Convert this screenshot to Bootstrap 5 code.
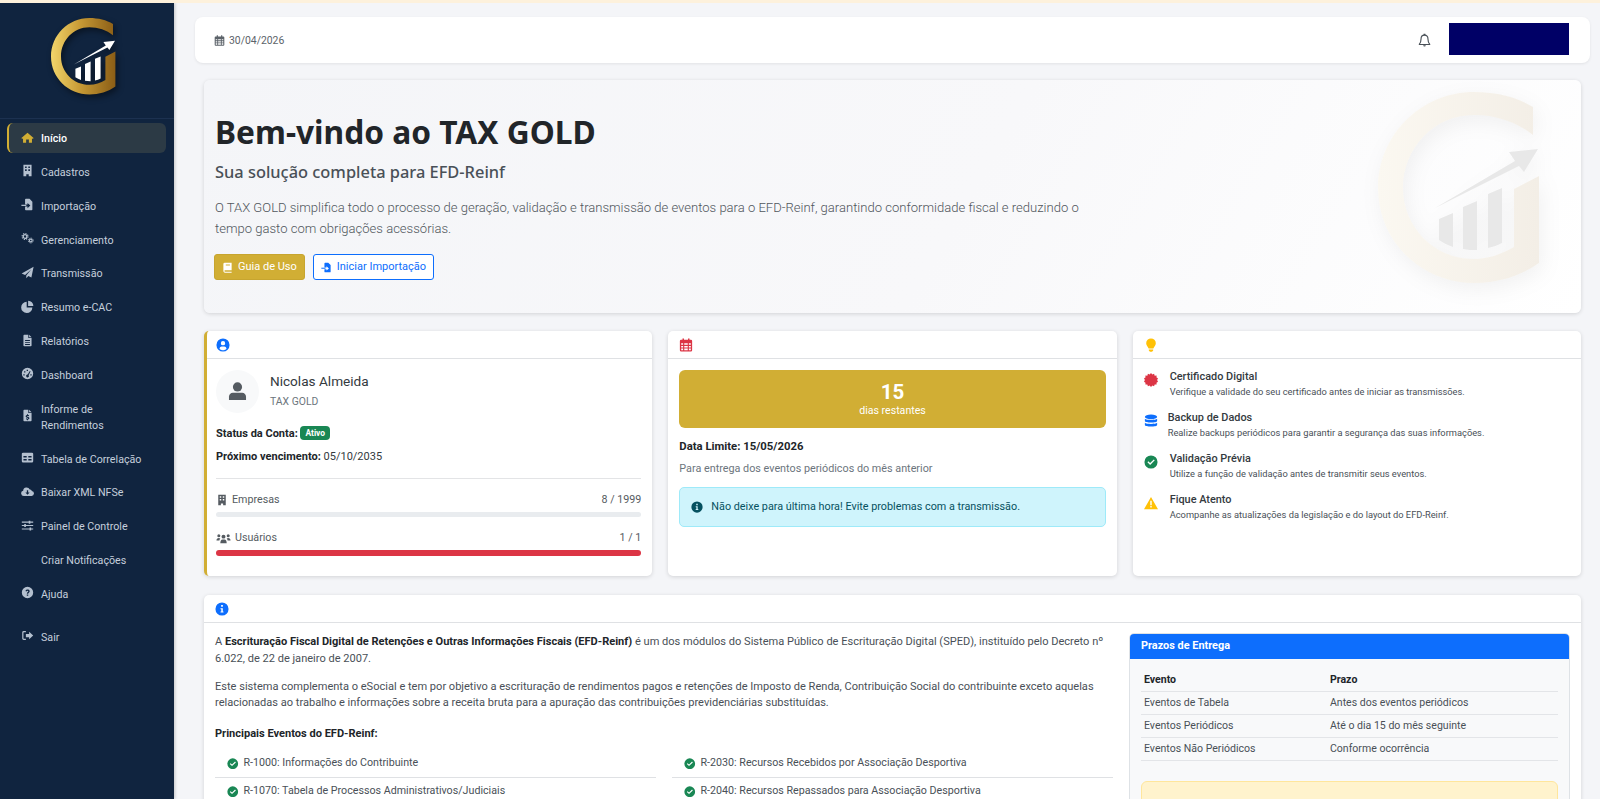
<!DOCTYPE html>
<html lang="pt-BR">
<head>
<meta charset="UTF-8">
<meta name="viewport" content="width=device-width, initial-scale=1.0">
<title>TAX GOLD</title>
<link href="https://cdn.jsdelivr.net/npm/bootstrap@5.3.0/dist/css/bootstrap.min.css" rel="stylesheet">
<style>
html, body { height: 100%; overflow: hidden; }
body { font-family: Roboto, "Noto Sans", sans-serif; font-size: 11px; background: #f4f5f8; color: #343a40; border-top: 3px solid #fdf1dc; }
.ico { width: 1em; height: 1em; fill: currentColor; flex-shrink: 0; }
.shell { height: 796px; }
.lateral { width: 174px; background: #10243f; box-shadow: 1px 0 3px rgba(0,0,0,.2); }
.logo-box { height: 116px; padding-top: 15px; border-bottom: 1px solid #1c3150; }
.logo-box svg { width: 66px; height: 78px; display: block; margin-left: 51px; filter: drop-shadow(2px 3px 3px rgba(0,0,0,.45)); }
.lateral .nav { padding: 4px 8px 0 7px; }
.lateral .nav-link { display: flex; align-items: center; color: #c5cfdc; font-size: 10.7px; line-height: 16px; padding: 8px 6px 6px 12px; margin-bottom: 3.85px; border-left: 2px solid transparent; border-radius: 6px; }
.lateral .nav-link .ico { width: 13px; height: 13px; margin-right: 7px; color: #b4c0cf; margin-top: -4px; }
.lateral .nav-link.ativo { background: #2c3a45; border-left-color: #d1ae34; color: #fff; font-weight: 500; }
.lateral .nav-link.ativo .ico { color: #d1ae34; }
.lateral .nav-link.sem-ico { padding-left: 32px; }
.lateral .nav-link.sair { margin-top: 9px; }
.principal { padding: 14px 10px 0 21px; min-width: 0; }
.topo { height: 46px; border-radius: 8px; padding: 0 21px 0 19px; box-shadow: 0 1px 3px rgba(0,0,0,.08); color: #5c636a; font-size: 10.4px; }
.topo .ico { font-size: 11px; }
.data-topo { padding-top: 2px; }
.sino { font-size: 15px !important; color: #495057; margin-right: 17px; }
.caixa-azul { width: 120px; height: 32px; background: #000066; margin-top: -2px; }
.conteudo { margin: 17px 9px 0; }
.hero { height: 233px; padding: 30px 11px 0; border-radius: 6px; border: 0; background: linear-gradient(120deg, #f4f5f8 0%, #f8f8fa 55%, #fff 100%); box-shadow: 0 1px 4px rgba(0,0,0,.14); }
.hero h1 { font-family: "Noto Sans", sans-serif; font-size: 31.7px; font-weight: 700; color: #212529; line-height: 44px; margin: 0 0 7px; }
.hero .sub { font-family: "Noto Sans", sans-serif; font-size: 16.4px; font-weight: 500; color: #495057; line-height: 22px; margin-bottom: 15px; }
.hero .txt { font-size: 13.05px; line-height: 20.5px; color: #50565c; width: 890px; margin-bottom: 15px; font-weight: 300; }
.marca { position: absolute; left: 1174px; top: 12px; width: 165px; height: 195px; filter: drop-shadow(3px 6px 10px rgba(0,0,0,.05)); }
.botoes { margin-left: -1px; }
.btn-ouro, .btn-linha { font-size: 11px; height: 26px; padding: 0 7px; display: inline-flex; align-items: center; gap: 5px; border-radius: 3px; }
.btn-ouro { background: #d1ae34; border: 1px solid #c7a52f; color: #fff; }
.btn-linha { border: 1px solid #0d6efd; color: #0d6efd; background: #fff; }
.cartao { border: 0; border-radius: 5px; box-shadow: 0 1px 4px rgba(0,0,0,.14); background: #fff; }
.cartao-topo { height: 28px; border-bottom: 1px solid #dfe1e4; padding: 0 11px; display: flex; align-items: center; font-size: 14px; }
.borda-ouro .cartao-topo { padding-left: 9px; }
.linha-cards { height: 264px; margin-top: 2px !important; }
.linha-cards .cartao { height: 245px; }
.borda-ouro { border-left: 3px solid #d1ae34; }
.corpo-perfil { padding: 11px 11px 0 9px; }
.corpo-prazo { padding: 11px 11px 0; }
.corpo-dicas { padding: 9px 11px 0; }
.corpo-info { padding: 10px 11px 11px; }
.avatar { width: 43px; height: 43px; background: #f8f9fa; color: #555b61; font-size: 21px; margin-right: 11px; margin-bottom: 13px; }
.nome { font-size: 13.6px; font-weight: 400; line-height: 18px; color: #343a40; margin-top: 2px; }
.empresa { font-size: 10.4px; color: #6c757d; line-height: 14px; margin-top: 5px; }
.dado { font-size: 11px; line-height: 16px; margin-bottom: 7px; }
.dado b { color: #212529; font-weight: 700; }
.selo { font-size: 8.4px; padding: 3px 5px; border-radius: 4px; vertical-align: 1px; font-weight: 700; }
.divisor { border-top: 1px solid #e3e4e6; margin: 13px 0 13px; }
.barra-fina { height: 5px; background: #e9ecef; margin-bottom: 13px; border-radius: 3px; }
.barra-cheia { height: 6px; background: #dc3545; border-radius: 3px; }
.uso { font-size: 10.7px; line-height: 16px; color: #555b61; margin-bottom: 4px; }
.uso .ico { font-size: 12px; margin-right: 4px; }
.uso .ico-largo { font-size: 15px; }
.dias { height: 58px; background: #d1ae34; border-radius: 6px; color: #fff; margin-bottom: 11px; padding-top: 10px; }
.dias strong { display: block; font-size: 20.5px; line-height: 24px; }
.dias span { display: block; font-size: 10.6px; line-height: 13px; }
.limite { font-size: 11.3px; font-weight: 700; color: #212529; line-height: 16px; margin-bottom: 6px; }
.obs { font-size: 10.8px; color: #6c757d; line-height: 15px; margin-bottom: 11px; }
.aviso { height: 40px; padding: 0 11px; font-size: 10.8px; display: flex; align-items: center; gap: 8px; margin: 0; border-radius: 5px; background: #cff4fc; border-color: #9eeaf9; color: #055160; }
.aviso .ico { font-size: 12px; }
.dica { display: flex; align-items: flex-start; height: 41px; }
.dica .ico { font-size: 14px; width: 14px; margin-right: 12px; margin-top: 5px; }
.dica .ico.text-primary { margin-right: 10px; }
.dica h6 { font-size: 10.9px; font-weight: 500; line-height: 15px; margin: 1px 0 1px; color: #343a40; }
.dica p { font-size: 9.3px; line-height: 14px; margin: 0; color: #495057; }
.texto p { font-size: 11.05px; line-height: 16.6px; color: #495057; margin-bottom: 11.5px; }
.texto .col-8 > p:first-child { margin-top: 1px; }
.texto p b { color: #212529; }
.texto .titulo-lista { font-weight: 700; color: #212529; margin: 14px 0 8px; }
.texto .list-group-item { font-size: 10.7px; line-height: 16px; padding: 5px 12px 6px; color: #495057; display: flex; align-items: center; gap: 5px; border-color: #dfe1e4; }
.texto .list-group-item .ico { font-size: 11.5px; color: #198754; }
.prazos { border: 1px solid #dee2e6; border-radius: 5px; background: #f8f9fa; overflow: hidden; }
.prazos-topo { height: 25px; background: #0d6efd; color: #fff; font-weight: 700; font-size: 10.9px; padding: 0 11px; display: flex; align-items: center; }
.prazos-corpo { padding: 10px 11px; }
.prazos table { font-size: 10.55px; margin-bottom: 20px; color: #495057; }
.prazos th { color: #212529; font-weight: 700; }
.prazos th:first-child { width: 44.6%; }
.prazos th, .prazos td { padding: 3px; line-height: 16px; border-color: #e3e5e8; }
.prazos .alert { font-size: 10.6px; padding: 14px 11px; }
</style>
</head>
<body>

<svg width="0" height="0" class="position-absolute">
  <defs>
    <linearGradient id="ouro" x1="0" y1="0" x2="1" y2="0">
      <stop offset="0" stop-color="#f2d56b"/>
      <stop offset=".45" stop-color="#c79a35"/>
      <stop offset="1" stop-color="#8a5d16"/>
    </linearGradient>
    <linearGradient id="ouro-claro" x1="0" y1="0" x2="1" y2="0">
      <stop offset="0" stop-color="#fbf8f1"/>
      <stop offset="1" stop-color="#f3eee6"/>
    </linearGradient>
    <symbol id="g-aro" viewBox="0 0 165 195">
      <path d="M155 15 C139 5 118 0 96 0 C43 0 0 43 0 96 C0 149 43 191 96 191 C120 191 143 184 161 171 V84 L136 97 V155 C124 162 110 167 96 167 C56 167 25 135 25 96 C25 56 56 23 96 23 C118 23 139 30 155 43 Z"/>
    </symbol>
    <symbol id="g-seta" viewBox="0 0 165 195">
      <path d="M57 116 L137 69 L131 60 L160 57 L146 80 L141 74 Z"/>
      <path d="M61 127 L75 121 V155 C70 153 65 151 61 148 Z"/>
      <path d="M85 115 L99 109 V158 C94 158 89 158 85 157 Z"/>
      <path d="M110 102 L124 96 V151 C120 153 115 155 110 156 Z"/>
    </symbol>
    <symbol id="i-home" viewBox="0 0 16 16"><path d="M8 2 15.500 8.600 14.600 9.700 13.500 8.800V14.500H9.700V10.500H6.300V14.500H2.500V8.800L1.400 9.700.5 8.600Z"/></symbol>
    <symbol id="i-predio" viewBox="0 0 16 16"><path fill-rule="evenodd" d="M3 1H13V15H9.500V12.500H6.500V15H3ZM5 3V5H7V3ZM9 3V5H11V3ZM5 6.500V8.500H7V6.500ZM9 6.500V8.500H11V6.500Z"/></symbol>
    <symbol id="i-importar" viewBox="0 0 16 16"><path d="M5 2a1 1 0 0 1 1-1h4.500L14 4.500V14a1 1 0 0 1-1 1H6a1 1 0 0 1-1-1V10.500H8V12.500L11.500 9.300 8 6V8H5Z"/><path d="M.5 8.300H6.500V9.800H.5Z"/></symbol>
    <symbol id="i-engrenagens" viewBox="0 0 16 16"><g fill="none" stroke="currentColor"><circle cx="5" cy="5.500" r="2.300" stroke-width="1.700"/><circle cx="5" cy="5.500" r="3.700" stroke-width="1.300" stroke-dasharray="1.500 1.400"/><circle cx="12" cy="10.500" r="1.700" stroke-width="1.400"/><circle cx="12" cy="10.500" r="3" stroke-width="1.200" stroke-dasharray="1.300 1.100"/></g></symbol>
    <symbol id="i-aviao" viewBox="0 0 16 16"><path d="M15.500.8 .8 9.200 5 11 12.500 4.200 6.500 11.600V15.200L9 12.400 12.800 14Z"/></symbol>
    <symbol id="i-pizza" viewBox="0 0 16 16"><path d="M7 2.200A6.900 6.900 0 1 0 14 9.300H7Z"/><path d="M8.800 .9A6.400 6.400 0 0 1 15.200 7.400H8.800Z"/></symbol>
    <symbol id="i-doc" viewBox="0 0 16 16"><path fill-rule="evenodd" d="M3 2a1 1 0 0 1 1-1h5v4h4v9a1 1 0 0 1-1 1H4a1 1 0 0 1-1-1ZM5 7.500V8.700H11V7.500ZM5 10V11.200H11V10ZM5 12.300V13.400H11V12.300Z"/><path d="M10 1 13 4H10Z"/></symbol>
    <symbol id="i-painel" viewBox="0 0 16 16"><path fill-rule="evenodd" d="M8 1A7 7 0 1 1 8 15 7 7 0 0 1 8 1ZM7 3.300V4.900H8.600V3.300ZM3.800 5.300V6.900H5.400V5.300ZM2.900 8.800V10.400H4.500V8.800ZM11.500 8.800V10.400H13.100V8.800ZM10.900 4.800 8.200 9.300A1.700 1.700 0 1 0 9.400 10L11.800 5.300Z"/></symbol>
    <symbol id="i-recibo" viewBox="0 0 16 16"><path fill-rule="evenodd" d="M3 2a1 1 0 0 1 1-1h5v4h4v9a1 1 0 0 1-1 1H4a1 1 0 0 1-1-1ZM7.400 6.500V7.300C6.300 7.500 5.700 8.200 5.700 9 5.700 10 6.600 10.400 7.500 10.700 8.300 11 8.800 11.100 8.800 11.500 8.800 12 7.500 12 6.200 11.500V12.700C6.600 12.900 7 13 7.400 13V13.800H8.600V13C9.700 12.800 10.300 12.200 10.300 11.400 10.300 10.300 9.400 9.900 8.400 9.600 7.700 9.400 7.200 9.300 7.200 8.900 7.200 8.400 8.400 8.400 9.800 8.900V7.600C9.400 7.400 9 7.300 8.600 7.300V6.500Z"/><path d="M10 1 13 4H10Z"/></symbol>
    <symbol id="i-tabela" viewBox="0 0 16 16"><path fill-rule="evenodd" d="M2.500 2H13.500A1.500 1.500 0 0 1 15 3.500V12.500A1.500 1.500 0 0 1 13.500 14H2.500A1.500 1.500 0 0 1 1 12.500V3.500A1.500 1.500 0 0 1 2.500 2ZM3 6V8H7V6ZM9 6V8H13V6ZM3 9.700V11.700H7V9.700ZM9 9.700V11.700H13V9.700Z"/></symbol>
    <symbol id="i-nuvem" viewBox="0 0 16 16"><path fill-rule="evenodd" d="M3.600 13.500A3.300 3.300 0 0 1 2.700 7 4 4 0 0 1 6.500 3 4.400 4.400 0 0 1 10.800 5.600 2.300 2.300 0 0 1 13.300 7.500 3 3 0 0 1 12.500 13.500ZM7.200 6.500V9.300H5.400L8 12 10.600 9.300H8.800V6.500Z"/></symbol>
    <symbol id="i-ajustes" viewBox="0 0 16 16"><path d="M1 3.200H15V4.500H1ZM1 7.400H15V8.700H1ZM1 11.600H15V12.900H1Z"/><path d="M9.500 2H11.500V5.700H9.500ZM4 6.200H6V9.900H4ZM10.500 10.400H12.500V14.100H10.500Z"/></symbol>
    <symbol id="i-ajuda" viewBox="0 0 16 16"><path fill-rule="evenodd" d="M8 1A7 7 0 1 1 8 15 7 7 0 0 1 8 1ZM5.400 6.200 6.800 6.800C7 6.100 7.400 5.700 8 5.700 8.600 5.700 9 6 9 6.500 9 7.300 7.200 7.600 7.200 9.500H8.800C8.800 8.400 10.700 8.100 10.700 6.400 10.700 5.100 9.500 4.300 8 4.300 6.700 4.300 5.800 5 5.400 6.200ZM7.100 10.400V12H8.900V10.400Z"/></symbol>
    <symbol id="i-sair" viewBox="0 0 16 16"><path d="M6 2.500V4H3.500A.5.500 0 0 0 3 4.500V11.500A.5.500 0 0 0 3.500 12H6V13.500H3.300A1.800 1.800 0 0 1 1.500 11.700V4.300A1.800 1.800 0 0 1 3.300 2.500Z"/><path d="M10 3.500 15 8 10 12.500V10H6V6H10Z"/></symbol>
    <symbol id="i-calendario" viewBox="0 0 16 16"><path fill-rule="evenodd" d="M4 .5H5.700V2H10.300V.5H12V2H13.500A1.500 1.500 0 0 1 15 3.500V14A1.500 1.500 0 0 1 13.500 15.500H2.500A1.500 1.500 0 0 1 1 14V3.500A1.500 1.500 0 0 1 2.500 2H4ZM2.500 6V7.800H4.700V6ZM6 6V7.800H10V6ZM11.300 6V7.800H13.500V6ZM2.500 9V10.800H4.700V9ZM6 9V10.800H10V9ZM11.300 9V10.800H13.500V9ZM2.500 12V14H4.700V12ZM6 12V14H10V12ZM11.300 12V14H13.500V12Z"/></symbol>
    <symbol id="i-sino" viewBox="0 0 16 16"><path fill="none" stroke="currentColor" stroke-width="1.200" stroke-linejoin="round" d="M8 2.300C5.600 2.300 4.300 4 4.300 6.300 4.300 9.500 3.600 10.800 2.400 12.200H13.600C12.400 10.800 11.700 9.500 11.700 6.300 11.700 4 10.400 2.300 8 2.300Z"/><path d="M7 .7H9V2.400H7ZM6.600 13H9.400A1.400 1.400 0 0 1 6.600 13Z"/></symbol>
    <symbol id="i-livro" viewBox="0 0 16 16"><path fill-rule="evenodd" d="M4 1H14V12H4.200A1.300 1.300 0 0 0 4.200 14.200H14V15.500H4A2.200 2.200 0 0 1 2 13.200V3A2 2 0 0 1 4 1ZM5.500 3.800V5H11.500V3.800Z"/></symbol>
    <symbol id="i-usuario-c" viewBox="0 0 16 16"><path fill-rule="evenodd" d="M8 .5A7.500 7.500 0 1 1 8 15.500 7.500 7.500 0 0 1 8 .5ZM8 3.400A2.500 2.500 0 1 0 8 8.400 2.500 2.500 0 0 0 8 3.400ZM4 12.300C4.900 13.400 6.400 14 8 14 9.600 14 11.100 13.400 12 12.300 11.700 10.700 10.700 9.700 9.500 9.700H6.500C5.300 9.700 4.300 10.700 4 12.300Z"/></symbol>
    <symbol id="i-usuario" viewBox="0 0 16 16"><circle cx="8" cy="4.500" r="3.500"/><path d="M4.500 9H11.500C13.300 9 14.500 10.400 14.500 12V14.500H1.500V12C1.500 10.400 2.700 9 4.500 9Z"/></symbol>
    <symbol id="i-grupo" viewBox="0 0 16 16"><circle cx="3" cy="5" r="1.600"/><circle cx="13" cy="5" r="1.600"/><circle cx="8" cy="6" r="2.100"/><path d="M.5 10.200C.5 8.300 1.400 7.400 3 7.400 3.600 7.400 4.200 7.600 4.600 8 4 8.700 3.700 9.400 3.600 10.200ZM15.500 10.200C15.500 8.300 14.600 7.400 13 7.400 12.400 7.400 11.800 7.600 11.400 8 12 8.700 12.300 9.400 12.400 10.200ZM4.600 13C4.600 10.600 5.400 9 7 9H9C10.600 9 11.400 10.600 11.400 13Z"/></symbol>
    <symbol id="i-selo" viewBox="0 0 16 16"><path d="M8 0 9.500 1.700 11.500 .9 12.200 3 14.400 2.900 14.300 5 16 6 15 8 16 10 14.300 11 14.400 13.100 12.200 13 11.500 15.100 9.500 14.300 8 16 6.500 14.300 4.500 15.100 3.800 13 1.600 13.100 1.700 11 0 10 1 8 0 6 1.700 5 1.600 2.900 3.800 3 4.500 .9 6.500 1.700Z"/></symbol>
    <symbol id="i-banco" viewBox="0 0 16 16"><ellipse cx="8" cy="3.300" rx="7" ry="2.600"/><path d="M1 5.400C2.300 7.200 13.700 7.200 15 5.400V8C15 10.300 1 10.300 1 8Z"/><path d="M1 10C2.300 11.800 13.700 11.800 15 10V12.700C15 15 1 15 1 12.700Z"/></symbol>
    <symbol id="i-ok" viewBox="0 0 16 16"><path fill-rule="evenodd" d="M8 .5A7.500 7.500 0 1 1 8 15.500 7.500 7.500 0 0 1 8 .5ZM11.200 5 7 9.200 4.900 7.200 3.900 8.300 7 11.300 12.300 6.100Z"/></symbol>
    <symbol id="i-alerta" viewBox="0 0 16 16"><path fill-rule="evenodd" d="M8 1 16 15H0ZM7.200 5.500V10.500H8.800V5.500ZM7.200 11.500V13H8.800V11.500Z"/></symbol>
    <symbol id="i-lampada" viewBox="0 0 16 16"><path d="M8 .5A5.500 5.500 0 0 1 13.500 6C13.500 8.400 11.500 9.800 10.700 12H5.300C4.500 9.800 2.500 8.400 2.500 6A5.500 5.500 0 0 1 8 .5Z"/><path d="M5.500 13H10.500V14C10.500 15 9.500 15.700 8 15.700 6.500 15.700 5.500 15 5.500 14Z"/></symbol>
    <symbol id="i-info" viewBox="0 0 16 16"><path fill-rule="evenodd" d="M8 .5A7.500 7.500 0 1 1 8 15.500 7.500 7.500 0 0 1 8 .5ZM7 3.500V5.500H9V3.500ZM6.300 7V8.300H7.200V10.800H6.300V12H9.700V10.800H8.900V7Z"/></symbol>
  </defs>
</svg>

<div class="shell d-flex">
  <aside class="lateral flex-shrink-0">
    <div class="logo-box">
      <svg viewBox="0 0 165 195"><use href="#g-aro" fill="url(#ouro)"/><use href="#g-seta" fill="#fff"/></svg>
    </div>
    <nav class="nav flex-column">
      <a class="nav-link ativo" href="#"><svg class="ico"><use href="#i-home"/></svg>Início</a>
      <a class="nav-link" href="#"><svg class="ico"><use href="#i-predio"/></svg>Cadastros</a>
      <a class="nav-link" href="#"><svg class="ico"><use href="#i-importar"/></svg>Importação</a>
      <a class="nav-link" href="#"><svg class="ico"><use href="#i-engrenagens"/></svg>Gerenciamento</a>
      <a class="nav-link" href="#"><svg class="ico"><use href="#i-aviao"/></svg>Transmissão</a>
      <a class="nav-link" href="#"><svg class="ico"><use href="#i-pizza"/></svg>Resumo e-CAC</a>
      <a class="nav-link" href="#"><svg class="ico"><use href="#i-doc"/></svg>Relatórios</a>
      <a class="nav-link" href="#"><svg class="ico"><use href="#i-painel"/></svg>Dashboard</a>
      <a class="nav-link" href="#"><svg class="ico"><use href="#i-recibo"/></svg>Informe de<br>Rendimentos</a>
      <a class="nav-link" href="#"><svg class="ico"><use href="#i-tabela"/></svg>Tabela de Correlação</a>
      <a class="nav-link" href="#"><svg class="ico"><use href="#i-nuvem"/></svg>Baixar XML NFSe</a>
      <a class="nav-link" href="#"><svg class="ico"><use href="#i-ajustes"/></svg>Painel de Controle</a>
      <a class="nav-link sem-ico" href="#">Criar Notificações</a>
      <a class="nav-link" href="#"><svg class="ico"><use href="#i-ajuda"/></svg>Ajuda</a>
      <a class="nav-link sair" href="#"><svg class="ico"><use href="#i-sair"/></svg>Sair</a>
    </nav>
  </aside>

  <main class="principal flex-grow-1">
    <header class="topo bg-white d-flex align-items-center justify-content-between">
      <div class="data-topo d-flex align-items-center gap-1"><svg class="ico"><use href="#i-calendario"/></svg>30/04/2026</div>
      <div class="d-flex align-items-center">
        <svg class="ico sino"><use href="#i-sino"/></svg>
        <div class="caixa-azul"></div>
      </div>
    </header>

    <div class="conteudo">
      <section class="hero card position-relative">
        <h1>Bem-vindo ao TAX GOLD</h1>
        <div class="sub">Sua solução completa para EFD-Reinf</div>
        <p class="txt">O TAX GOLD simplifica todo o processo de geração, validação e transmissão de eventos para o EFD-Reinf, garantindo conformidade fiscal e reduzindo o tempo gasto com obrigações acessórias.</p>
        <div class="botoes d-flex gap-2">
          <a class="btn btn-ouro" href="#"><svg class="ico"><use href="#i-livro"/></svg>Guia de Uso</a>
          <a class="btn btn-linha" href="#"><svg class="ico"><use href="#i-importar"/></svg>Iniciar Importação</a>
        </div>
        <svg class="marca" viewBox="0 0 165 195"><use href="#g-aro" fill="url(#ouro-claro)"/><use href="#g-seta" fill="#e8e8e8"/></svg>
      </section>

      <div class="row g-3 linha-cards">
        <div class="col-4">
          <div class="cartao borda-ouro">
            <div class="cartao-topo text-primary"><svg class="ico"><use href="#i-usuario-c"/></svg></div>
            <div class="corpo-perfil">
              <div class="d-flex">
                <div class="avatar rounded-circle d-flex align-items-center justify-content-center"><svg class="ico"><use href="#i-usuario"/></svg></div>
                <div>
                  <div class="nome">Nicolas Almeida</div>
                  <div class="empresa">TAX GOLD</div>
                </div>
              </div>
              <div class="dado"><b>Status da Conta:</b> <span class="badge bg-success selo">Ativo</span></div>
              <div class="dado"><b>Próximo vencimento:</b> 05/10/2035</div>
              <div class="divisor"></div>
              <div class="uso d-flex justify-content-between"><span class="d-flex align-items-center"><svg class="ico"><use href="#i-predio"/></svg>Empresas</span><span>8 / 1999</span></div>
              <div class="barra-fina"></div>
              <div class="uso d-flex justify-content-between"><span class="d-flex align-items-center"><svg class="ico ico-largo"><use href="#i-grupo"/></svg>Usuários</span><span>1 / 1</span></div>
              <div class="barra-cheia"></div>
            </div>
          </div>
        </div>
        <div class="col-4">
          <div class="cartao">
            <div class="cartao-topo text-danger"><svg class="ico"><use href="#i-calendario"/></svg></div>
            <div class="corpo-prazo">
              <div class="dias text-center"><strong>15</strong><span>dias restantes</span></div>
              <div class="limite">Data Limite: 15/05/2026</div>
              <div class="obs">Para entrega dos eventos periódicos do mês anterior</div>
              <div class="alert aviso"><svg class="ico"><use href="#i-info"/></svg>Não deixe para última hora! Evite problemas com a transmissão.</div>
            </div>
          </div>
        </div>
        <div class="col-4">
          <div class="cartao">
            <div class="cartao-topo text-warning"><svg class="ico"><use href="#i-lampada"/></svg></div>
            <div class="corpo-dicas">
              <div class="dica"><svg class="ico text-danger"><use href="#i-selo"/></svg><div><h6>Certificado Digital</h6><p>Verifique a validade do seu certificado antes de iniciar as transmissões.</p></div></div>
              <div class="dica"><svg class="ico text-primary"><use href="#i-banco"/></svg><div><h6>Backup de Dados</h6><p>Realize backups periódicos para garantir a segurança das suas informações.</p></div></div>
              <div class="dica"><svg class="ico text-success"><use href="#i-ok"/></svg><div><h6>Validação Prévia</h6><p>Utilize a função de validação antes de transmitir seus eventos.</p></div></div>
              <div class="dica"><svg class="ico text-warning"><use href="#i-alerta"/></svg><div><h6>Fique Atento</h6><p>Acompanhe as atualizações da legislação e do layout do EFD-Reinf.</p></div></div>
            </div>
          </div>
        </div>
      </div>

      <section class="cartao mt-3 texto">
        <div class="cartao-topo text-primary"><svg class="ico"><use href="#i-info"/></svg></div>
        <div class="corpo-info">
          <div class="row g-3">
            <div class="col-8">
              <p>A <b>Escrituração Fiscal Digital de Retenções e Outras Informações Fiscais (EFD-Reinf)</b> é um dos módulos do Sistema Público de Escrituração Digital (SPED), instituído pelo Decreto nº 6.022, de 22 de janeiro de 2007.</p>
              <p>Este sistema complementa o eSocial e tem por objetivo a escrituração de rendimentos pagos e retenções de Imposto de Renda, Contribuição Social do contribuinte exceto aquelas relacionadas ao trabalho e informações sobre a receita bruta para a apuração das contribuições previdenciárias substituídas.</p>
              <p class="titulo-lista">Principais Eventos do EFD-Reinf:</p>
              <div class="row g-3">
                <div class="col-6">
                  <ul class="list-group list-group-flush">
                    <li class="list-group-item"><svg class="ico"><use href="#i-ok"/></svg>R-1000: Informações do Contribuinte</li>
                    <li class="list-group-item"><svg class="ico"><use href="#i-ok"/></svg>R-1070: Tabela de Processos Administrativos/Judiciais</li>
                  </ul>
                </div>
                <div class="col-6">
                  <ul class="list-group list-group-flush">
                    <li class="list-group-item"><svg class="ico"><use href="#i-ok"/></svg>R-2030: Recursos Recebidos por Associação Desportiva</li>
                    <li class="list-group-item"><svg class="ico"><use href="#i-ok"/></svg>R-2040: Recursos Repassados para Associação Desportiva</li>
                  </ul>
                </div>
              </div>
            </div>
            <div class="col-4">
              <div class="prazos">
                <div class="prazos-topo">Prazos de Entrega</div>
                <div class="prazos-corpo">
                  <table class="table">
                    <thead><tr><th>Evento</th><th>Prazo</th></tr></thead>
                    <tbody>
                      <tr><td>Eventos de Tabela</td><td>Antes dos eventos periódicos</td></tr>
                      <tr><td>Eventos Periódicos</td><td>Até o dia 15 do mês seguinte</td></tr>
                      <tr><td>Eventos Não Periódicos</td><td>Conforme ocorrência</td></tr>
                    </tbody>
                  </table>
                  <div class="alert alert-warning">Atenção: o não cumprimento dos prazos pode gerar multas.</div>
                </div>
              </div>
            </div>
          </div>
        </div>
      </section>
    </div>
  </main>
</div>

<script src="https://cdn.jsdelivr.net/npm/bootstrap@5.3.0/dist/js/bootstrap.bundle.min.js"></script>
</body>
</html>
